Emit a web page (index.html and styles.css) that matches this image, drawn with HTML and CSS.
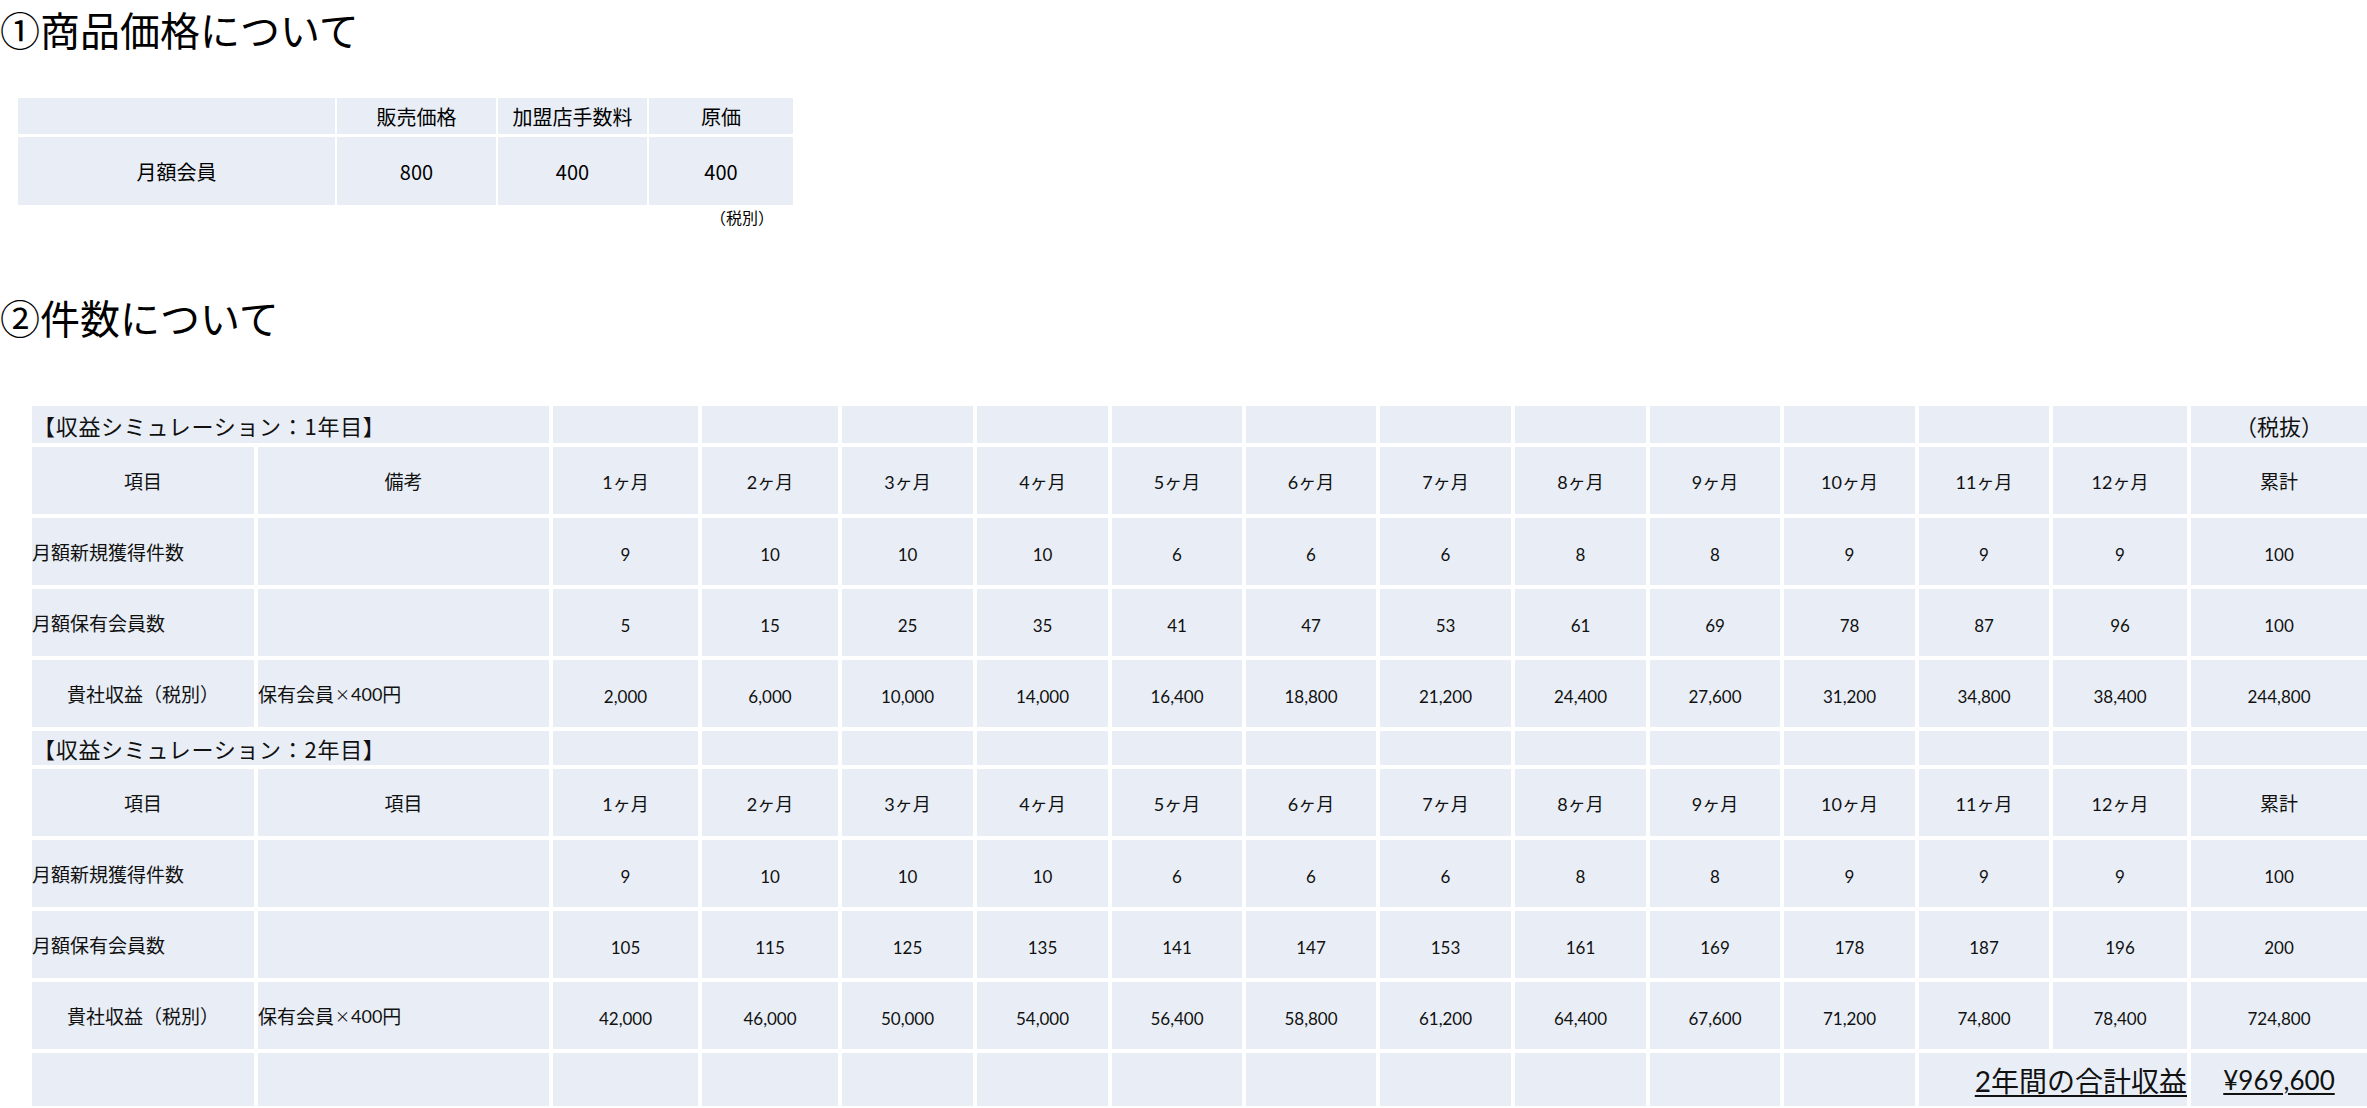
FILE: index.html
```html
<!DOCTYPE html>
<html lang="ja">
<head>
<meta charset="utf-8">
<title>収益シミュレーション</title>
<link rel="stylesheet" href="styles.css">
</head>
<body>
<h1 class="heading">①商品価格について</h1>
<div class="price">
  <div class="pc"></div>
  <div class="pc">販売価格</div>
  <div class="pc">加盟店手数料</div>
  <div class="pc">原価</div>
  <div class="pc">月額会員</div>
  <div class="pc">800</div>
  <div class="pc">400</div>
  <div class="pc">400</div>
</div>
<div class="note">（税別）</div>

<h1 class="heading heading-2">②件数について</h1>

<div class="sim">
  <!-- Year 1 -->
  <div class="c title">【収益シミュレーション：1年目】</div>
  <div class="c"></div><div class="c"></div><div class="c"></div><div class="c"></div><div class="c"></div><div class="c"></div>
  <div class="c"></div><div class="c"></div><div class="c"></div><div class="c"></div><div class="c"></div><div class="c"></div>
  <div class="c tax">（税抜）</div>

  <div class="c jp">項目</div>
  <div class="c jp">備考</div>
  <div class="c m">1ヶ月</div><div class="c m">2ヶ月</div><div class="c m">3ヶ月</div><div class="c m">4ヶ月</div>
  <div class="c m">5ヶ月</div><div class="c m">6ヶ月</div><div class="c m">7ヶ月</div><div class="c m">8ヶ月</div>
  <div class="c m">9ヶ月</div><div class="c m">10ヶ月</div><div class="c m">11ヶ月</div><div class="c m">12ヶ月</div>
  <div class="c jp">累計</div>

  <div class="c jp left">月額新規獲得件数</div>
  <div class="c"></div>
  <div class="c n">9</div><div class="c n">10</div><div class="c n">10</div><div class="c n">10</div>
  <div class="c n">6</div><div class="c n">6</div><div class="c n">6</div><div class="c n">8</div>
  <div class="c n">8</div><div class="c n">9</div><div class="c n">9</div><div class="c n">9</div>
  <div class="c n">100</div>

  <div class="c jp left">月額保有会員数</div>
  <div class="c"></div>
  <div class="c n">5</div><div class="c n">15</div><div class="c n">25</div><div class="c n">35</div>
  <div class="c n">41</div><div class="c n">47</div><div class="c n">53</div><div class="c n">61</div>
  <div class="c n">69</div><div class="c n">78</div><div class="c n">87</div><div class="c n">96</div>
  <div class="c n">100</div>

  <div class="c jp">貴社収益（税別）</div>
  <div class="c jp left">保有会員<span class="x">×</span><span class="d">400</span>円</div>
  <div class="c n">2,000</div><div class="c n">6,000</div><div class="c n">10,000</div><div class="c n">14,000</div>
  <div class="c n">16,400</div><div class="c n">18,800</div><div class="c n">21,200</div><div class="c n">24,400</div>
  <div class="c n">27,600</div><div class="c n">31,200</div><div class="c n">34,800</div><div class="c n">38,400</div>
  <div class="c n">244,800</div>

  <!-- Year 2 -->
  <div class="c title">【収益シミュレーション：2年目】</div>
  <div class="c"></div><div class="c"></div><div class="c"></div><div class="c"></div><div class="c"></div><div class="c"></div>
  <div class="c"></div><div class="c"></div><div class="c"></div><div class="c"></div><div class="c"></div><div class="c"></div>
  <div class="c"></div>

  <div class="c jp">項目</div>
  <div class="c jp">項目</div>
  <div class="c m">1ヶ月</div><div class="c m">2ヶ月</div><div class="c m">3ヶ月</div><div class="c m">4ヶ月</div>
  <div class="c m">5ヶ月</div><div class="c m">6ヶ月</div><div class="c m">7ヶ月</div><div class="c m">8ヶ月</div>
  <div class="c m">9ヶ月</div><div class="c m">10ヶ月</div><div class="c m">11ヶ月</div><div class="c m">12ヶ月</div>
  <div class="c jp">累計</div>

  <div class="c jp left">月額新規獲得件数</div>
  <div class="c"></div>
  <div class="c n">9</div><div class="c n">10</div><div class="c n">10</div><div class="c n">10</div>
  <div class="c n">6</div><div class="c n">6</div><div class="c n">6</div><div class="c n">8</div>
  <div class="c n">8</div><div class="c n">9</div><div class="c n">9</div><div class="c n">9</div>
  <div class="c n">100</div>

  <div class="c jp left">月額保有会員数</div>
  <div class="c"></div>
  <div class="c n">105</div><div class="c n">115</div><div class="c n">125</div><div class="c n">135</div>
  <div class="c n">141</div><div class="c n">147</div><div class="c n">153</div><div class="c n">161</div>
  <div class="c n">169</div><div class="c n">178</div><div class="c n">187</div><div class="c n">196</div>
  <div class="c n">200</div>

  <div class="c jp">貴社収益（税別）</div>
  <div class="c jp left">保有会員<span class="x">×</span><span class="d">400</span>円</div>
  <div class="c n">42,000</div><div class="c n">46,000</div><div class="c n">50,000</div><div class="c n">54,000</div>
  <div class="c n">56,400</div><div class="c n">58,800</div><div class="c n">61,200</div><div class="c n">64,400</div>
  <div class="c n">67,600</div><div class="c n">71,200</div><div class="c n">74,800</div><div class="c n">78,400</div>
  <div class="c n">724,800</div>

  <!-- Total -->
  <div class="c"></div><div class="c"></div>
  <div class="c"></div><div class="c"></div><div class="c"></div><div class="c"></div><div class="c"></div>
  <div class="c"></div><div class="c"></div><div class="c"></div><div class="c"></div><div class="c"></div>
  <div class="c total-label"><span>2年間の合計収益</span></div>
  <div class="c total-value"><span>¥969,600</span></div>
</div>
</body>
</html>
```
FILE: styles.css
```css
html, body {
  margin: 0;
  padding: 0;
  background: #ffffff;
}

body {
  font-family: "Noto Sans CJK JP", sans-serif;
  color: #000;
}

.heading {
  margin: 0;
  padding-top: 8px;
  font-size: 40px;
  line-height: 42px;
  font-weight: 400;
  letter-spacing: 0;
}

.heading-2 {
  margin-top: 62px;
}

/* ---------- price table ---------- */
.price {
  margin: 48px 0 0 18px;
  display: grid;
  grid-template-columns: 317px 159px 149px 144px;
  grid-template-rows: 36px 68px;
  column-gap: 2px;
  row-gap: 3px;
  width: 775px;
}

.pc {
  background: #e9eef6;
  display: flex;
  align-items: center;
  justify-content: center;
  font-size: 20px;
}

.note {
  width: 774px;
  margin-top: 3px;
  text-align: right;
  font-size: 16px;
  line-height: 18px;
}

/* ---------- simulation table ---------- */
.sim {
  margin: 68px 0 0 32px;
  display: grid;
  grid-template-columns: 222px 291px 145px 136px 131px 131px 130px 130px 131px 131px 130px 131px 130px 134px 176px;
  grid-template-rows: 37px 67px 67px 67px 67px 34px 67px 67px 67px 67px 53px;
  column-gap: 4px;
  row-gap: 4px;
}

.c {
  background: #e9eef6;
  display: flex;
  align-items: center;
  justify-content: center;
  white-space: nowrap;
  font-family: Lato, "Noto Sans CJK JP", sans-serif;
  font-size: 17px;
  color: #111;
}

.title {
  grid-column: span 2;
  justify-content: flex-start;
  padding-left: 1px;
  font-family: "Noto Sans CJK JP", sans-serif;
  font-size: 22px;
  letter-spacing: 0.7px;
}

.tax {
  font-family: "Noto Sans CJK JP", sans-serif;
  font-size: 22px;
}

.jp {
  font-family: "Noto Sans CJK JP", sans-serif;
  font-size: 19px;
}

.jp .d {
  font-family: Lato, sans-serif;
  font-size: 18px;
}

.jp .x {
  font-size: 15px;
  margin: 0 1px;
}

.m {
  font-size: 18px;
}

.n {
  font-size: 17px;
  padding-top: 6px;
}

.left {
  justify-content: flex-start;
}

.total-label {
  grid-column: span 2;
  justify-content: flex-end;
  font-family: Lato, "Noto Sans CJK JP", sans-serif;
  font-size: 28px;
}

.total-value {
  font-size: 26px;
}

.total-label span,
.total-value span {
  text-decoration: underline;
  text-decoration-thickness: 2px;
  text-underline-offset: 3px;
}
```
